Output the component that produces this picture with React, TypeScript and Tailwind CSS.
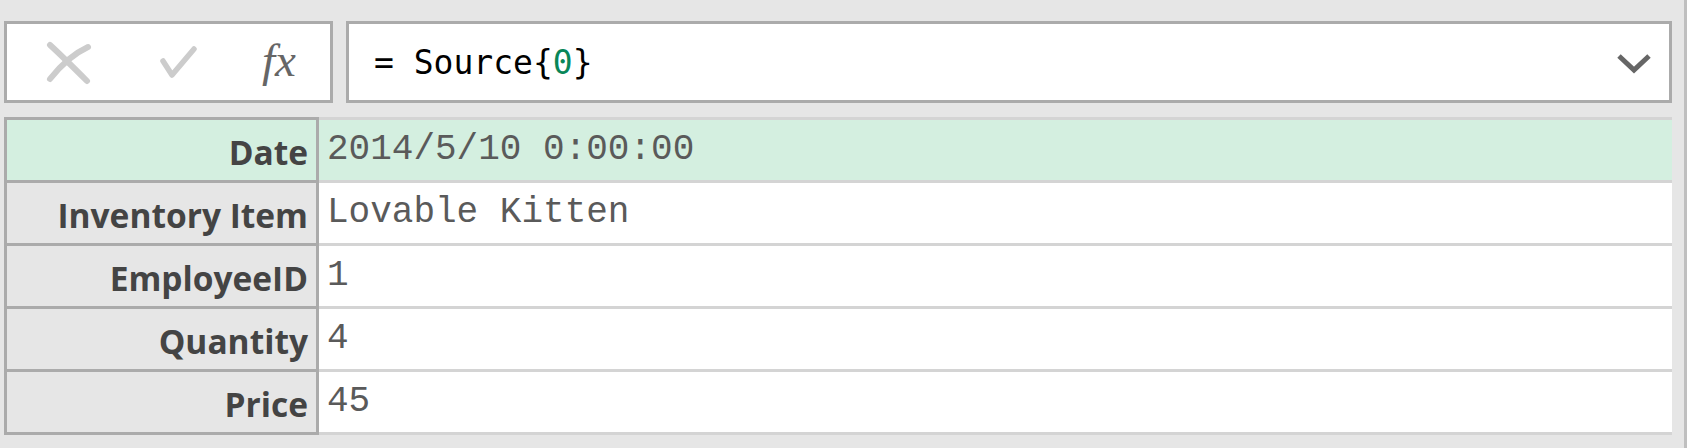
import React from 'react'

const rows = [
  { label: 'Date', value: '2014/5/10 0:00:00', active: true },
  { label: 'Inventory Item', value: 'Lovable Kitten' },
  { label: 'EmployeeID', value: '1' },
  { label: 'Quantity', value: '4' },
  { label: 'Price', value: '45' },
]

function CancelIcon() {
  return (
    <svg width="48" height="44" viewBox="0 0 48 44" className="block">
      <path d="M5 4 C 16 14, 30 28, 42 40" stroke="#cccccc" strokeWidth="6" strokeLinecap="round" fill="none" />
      <path d="M43 6 C 30 12, 16 24, 5 38" stroke="#cccccc" strokeWidth="6" strokeLinecap="round" fill="none" />
    </svg>
  )
}

function CheckIcon() {
  return (
    <svg width="40" height="36" viewBox="0 0 40 36" className="block">
      <path d="M4 16 L13 30 L35 4" stroke="#cccccc" strokeWidth="5.5" strokeLinecap="round" strokeLinejoin="round" fill="none" />
    </svg>
  )
}

function ChevronDown() {
  return (
    <svg width="36" height="24" viewBox="0 0 36 24" className="block">
      <path d="M3 4 L18 18 L33 4" stroke="#666666" strokeWidth="5" fill="none" />
    </svg>
  )
}

export default function App() {
  return (
    <div className="flex h-[448px] w-[1687px] overflow-hidden bg-[#e6e6e6]">
      <div className="flex w-[1684px] flex-col pl-1 pr-3 pt-[21px]">
        {/* formula bar */}
        <div className="flex h-[82px] gap-[13px]">
          <div className="flex w-[329px] items-center border-[3px] border-[#ababab] bg-white">
            <div className="ml-[38px] mt-[2px]">
              <CancelIcon />
            </div>
            <div className="ml-[66px] mt-[2px]">
              <CheckIcon />
            </div>
            <span className="ml-[63px] mb-[3px] font-['Liberation_Serif',serif] text-[47px] italic leading-none text-[#666]">
              fx
            </span>
          </div>
          <div className="flex flex-1 items-center justify-between border-[3px] border-[#ababab] bg-white pl-[25px] pr-[17px]">
            <span className="font-['DejaVu_Sans_Mono',monospace] text-[33px] leading-none text-black">
              = Source{'{'}
              <span className="text-[#098658]">0</span>
              {'}'}
            </span>
            <div className="mt-[3px]">
              <ChevronDown />
            </div>
          </div>
        </div>

        {/* record table */}
        <div className="mt-[14px] flex flex-col">
          {rows.map((r, i) => (
            <div key={r.label} className={`flex ${r.active ? 'bg-[#d4efe0]' : ''}`}>
              <div
                className={`flex h-[63px] w-[315px] items-center justify-end border-x-[3px] border-b-[3px] border-[#ababab] pr-[8px] pt-[4px] font-['Open_Sans',sans-serif] text-[33.5px] font-bold text-[#444] ${
                  i === 0 ? 'h-[66px] border-t-[3px]' : ''
                } ${r.active ? 'bg-[#d4efe0]' : 'bg-[#e6e6e6]'}`}
              >
                {r.label}
              </div>
              <div
                className={`flex h-[63px] flex-1 items-center border-b-[3px] border-[#d4d4d4] pl-[8px] font-['Liberation_Mono',monospace] text-[36px] text-[#5a5a5a] ${
                  i === 0 ? 'h-[66px] border-t-[3px]' : ''
                } ${r.active ? 'bg-[#d4efe0]' : 'bg-white'}`}
              >
                {r.value}
              </div>
            </div>
          ))}
        </div>
      </div>
      <div className="h-full w-[3px] bg-[#bfbfbf]" />
    </div>
  )
}
